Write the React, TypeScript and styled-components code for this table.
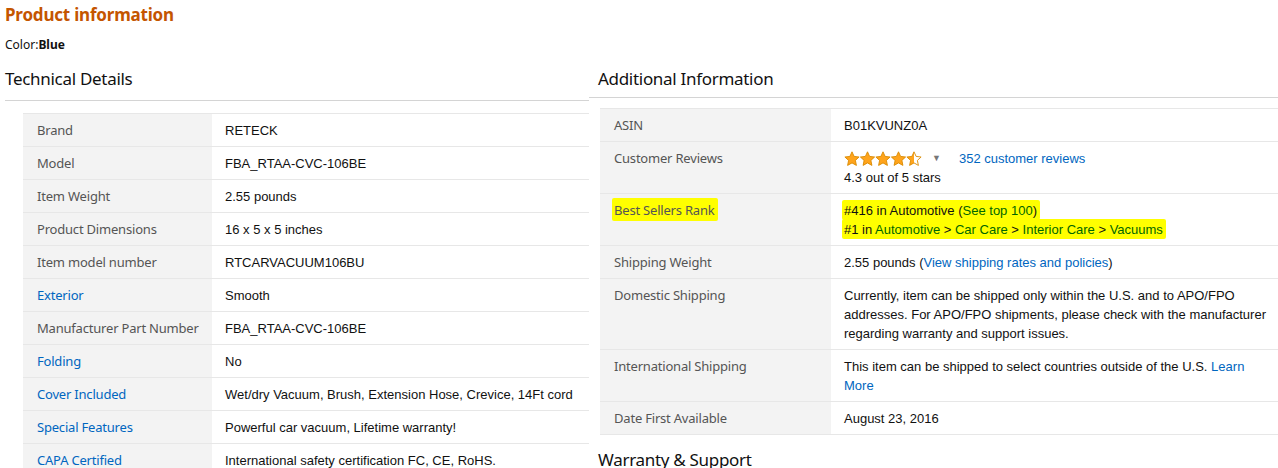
import React from 'react'
import styled, { createGlobalStyle } from 'styled-components'

const GlobalStyle = createGlobalStyle`
  body {
    margin: 0;
    background: #fff;
    overflow: hidden;
    font-family: 'Noto Sans', Arial, sans-serif;
    color: #111;
  }
`

const Page = styled.div`
  padding-left: 5px;
`

const Title = styled.h2`
  margin: 0;
  font-size: 17px;
  line-height: 30px;
  font-weight: 700;
  color: #c45500;
  letter-spacing: -0.2px;
`

const ColorLine = styled.div`
  margin-top: 5px;
  font-size: 12px;
  line-height: 20px;

  b {
    font-weight: 700;
  }
`

const Columns = styled.div`
  display: grid;
  grid-template-columns: 584px 1fr;
  margin-top: 12px;
`

const Column = styled.section<{ $inset?: number; $ruleGap: number }>`
  h3 {
    margin: 0;
    padding-left: ${(p) => p.$inset ?? 0}px;
    padding-bottom: ${(p) => p.$ruleGap}px;
    border-bottom: 1px solid #d4d4d4;
  }
`

const Heading = styled.h3`
  font-size: 17px;
  line-height: 24px;
  font-weight: 400;
  letter-spacing: -0.3px;
  color: #111;
`

const SubHeading = styled(Heading)`
  &&& {
    margin-top: 13px;
    border-bottom: none;
    padding-left: 9px;
  }
`

const SpecTable = styled.table<{ $offset: number; $gap: number }>`
  margin: ${(p) => p.$gap}px 0 0 ${(p) => p.$offset}px;
  width: calc(100% - ${(p) => p.$offset}px);
  border-collapse: collapse;
  border-top: 1px solid #e7e7e7;
`

const Row = styled.tr`
  border-bottom: 1px solid #e7e7e7;
`

const LabelCell = styled.th<{ $width: number; $link?: boolean }>`
  width: ${(p) => p.$width}px;
  box-sizing: border-box;
  padding: 7px 10px 6px 14px;
  background: #f3f3f3;
  text-align: left;
  vertical-align: top;
  font-family: 'Noto Sans', Arial, sans-serif;
  font-weight: 400;
  font-size: 13px;
  line-height: 19px;
  letter-spacing: -0.2px;
  color: ${(p) => (p.$link ? '#0066c0' : '#555')};
`

const ValueCell = styled.td`
  padding: 7px 10px 6px 13px;
  vertical-align: top;
  font-family: 'Liberation Sans', Arial, sans-serif;
  font-size: 13px;
  line-height: 19px;
  color: #111;
`

const Link = styled.a`
  color: #0066c0;
  text-decoration: none;
`

// yellow highlighter over the rank text
const Marker = styled.span`
  background: #ffff00;
  padding: 3px 3px 2px 2px;
  margin-left: -2px;
  border-radius: 2px;

  a {
    color: #006600;
    text-decoration: none;
  }
`

const Ratings = styled.div`
  display: flex;
  align-items: center;
  height: 19px;
`

const Caret = styled.span`
  margin: 0 18px 0 10px;
  font-size: 9px;
  color: #777;
`

const Star = ({ x, half }: { x: number; half?: boolean }) => (
  <g transform={`translate(${x} 0)`}>
    <path
      d="M8 0.8l2.1 4.6 5 .6-3.7 3.4 1 5-4.4-2.5-4.4 2.5 1-5L0.9 6l5-.6z"
      fill={half ? 'url(#halfStar)' : '#ffa41c'}
      stroke="#d98a00"
      strokeWidth="0.9"
      strokeLinejoin="round"
    />
  </g>
)

const Stars = () => (
  <svg width="78" height="16" viewBox="0 0 78 16">
    <defs>
      <linearGradient id="halfStar" x1="0" x2="1" y1="0" y2="0">
        <stop offset="50%" stopColor="#ffa41c" />
        <stop offset="50%" stopColor="#fff" />
      </linearGradient>
    </defs>
    {[0, 1, 2, 3].map((i) => (
      <Star key={i} x={i * 15.5} />
    ))}
    <Star x={62} half />
  </svg>
)

const technical: { label: string; value: string; link?: boolean }[] = [
  { label: 'Brand', value: 'RETECK' },
  { label: 'Model', value: 'FBA_RTAA-CVC-106BE' },
  { label: 'Item Weight', value: '2.55 pounds' },
  { label: 'Product Dimensions', value: '16 x 5 x 5 inches' },
  { label: 'Item model number', value: 'RTCARVACUUM106BU' },
  { label: 'Exterior', value: 'Smooth', link: true },
  { label: 'Manufacturer Part Number', value: 'FBA_RTAA-CVC-106BE' },
  { label: 'Folding', value: 'No', link: true },
  { label: 'Cover Included', value: 'Wet/dry Vacuum, Brush, Extension Hose, Crevice, 14Ft cord', link: true },
  { label: 'Special Features', value: 'Powerful car vacuum, Lifetime warranty!', link: true },
  { label: 'CAPA Certified', value: 'International safety certification FC, CE, RoHS.', link: true },
]

export default function App() {
  return (
    <Page>
      <GlobalStyle />
      <Title>Product information</Title>
      <ColorLine>
        Color:<b>Blue</b>
      </ColorLine>
      <Columns>
        <Column $ruleGap={9}>
          <Heading>Technical Details</Heading>
          <SpecTable $offset={18} $gap={12}>
            <tbody>
              {technical.map((row) => (
                <Row key={row.label}>
                  <LabelCell $width={189} $link={row.link}>
                    {row.label}
                  </LabelCell>
                  <ValueCell>{row.value}</ValueCell>
                </Row>
              ))}
            </tbody>
          </SpecTable>
        </Column>
        <Column $inset={9} $ruleGap={6}>
          <Heading>Additional Information</Heading>
          <SpecTable $offset={11} $gap={10}>
            <tbody>
              <Row>
                <LabelCell $width={231}>ASIN</LabelCell>
                <ValueCell>B01KVUNZ0A</ValueCell>
              </Row>
              <Row>
                <LabelCell $width={231}>Customer Reviews</LabelCell>
                <ValueCell>
                  <Ratings>
                    <Stars />
                    <Caret>▼</Caret>
                    <Link href="#">352 customer reviews</Link>
                  </Ratings>
                  4.3 out of 5 stars
                </ValueCell>
              </Row>
              <Row>
                <LabelCell $width={231}>
                  <Marker>Best Sellers Rank</Marker>
                </LabelCell>
                <ValueCell>
                  <Marker>
                    #416 in Automotive (<a href="#">See top 100</a>)
                  </Marker>
                  <br />
                  <Marker>
                    #1 in <a href="#">Automotive</a> &gt; <a href="#">Car Care</a> &gt;{' '}
                    <a href="#">Interior Care</a> &gt; <a href="#">Vacuums</a>
                  </Marker>
                </ValueCell>
              </Row>
              <Row>
                <LabelCell $width={231}>Shipping Weight</LabelCell>
                <ValueCell>
                  2.55 pounds (<Link href="#">View shipping rates and policies</Link>)
                </ValueCell>
              </Row>
              <Row>
                <LabelCell $width={231}>Domestic Shipping</LabelCell>
                <ValueCell>
                  Currently, item can be shipped only within the U.S. and to APO/FPO addresses. For
                  APO/FPO shipments, please check with the manufacturer regarding warranty and
                  support issues.
                </ValueCell>
              </Row>
              <Row>
                <LabelCell $width={231}>International Shipping</LabelCell>
                <ValueCell>
                  This item can be shipped to select countries outside of the U.S.{' '}
                  <Link href="#">Learn More</Link>
                </ValueCell>
              </Row>
              <Row>
                <LabelCell $width={231}>Date First Available</LabelCell>
                <ValueCell>August 23, 2016</ValueCell>
              </Row>
            </tbody>
          </SpecTable>
          <SubHeading>Warranty &amp; Support</SubHeading>
        </Column>
      </Columns>
    </Page>
  )
}
